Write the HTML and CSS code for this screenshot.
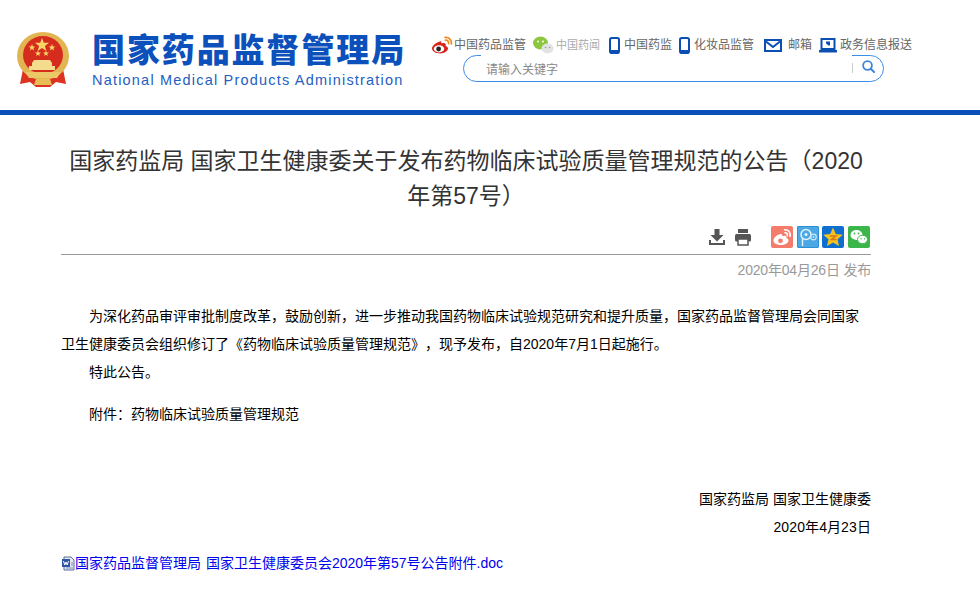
FILE: index.html
```html
<!DOCTYPE html>
<html lang="zh-CN">
<head>
    <meta charset="UTF-8">
    <meta name="viewport" content="width=device-width, initial-scale=1.0">
    <title>国家药监局 国家卫生健康委关于发布药物临床试验质量管理规范的公告</title>
    <link rel="stylesheet" href="styles.css">
</head>
<body>
    <header class="header">
        <div class="logo">
            <svg class="emblem" viewBox="0 0 54 56" width="54" height="56">
                <path d="M7 37 L4 52 L14 50 L20 55 L34 55 L40 50 L50 52 L47 37 Z" fill="#dc3322"/>
                <ellipse cx="27" cy="24" rx="26" ry="24" fill="#e2b552"/>
                <ellipse cx="27" cy="23" rx="20" ry="19" fill="#d62c1e"/>
                <path d="M26 6 L27.800 10.800 L33 10.800 L28.900 14 L30.400 19 L26 16 L21.600 19 L23.100 14 L19 10.800 L24.200 10.800 Z" fill="#f6d667"/>
                <path d="M16 12 L16.900 14.400 L19.400 14.400 L17.400 16 L18.100 18.400 L16 17 L13.900 18.400 L14.600 16 L12.600 14.400 L15.100 14.400 Z" fill="#f6d667"/>
                <path d="M36 12 L36.900 14.400 L39.400 14.400 L37.400 16 L38.100 18.400 L36 17 L33.900 18.400 L34.600 16 L32.600 14.400 L35.100 14.400 Z" fill="#f6d667"/>
                <path d="M22 18.500 L22.800 20.600 L25 20.600 L23.200 22 L23.900 24 L22 22.800 L20.100 24 L20.800 22 L19 20.600 L21.200 20.600 Z" fill="#f6d667"/>
                <path d="M30 18.500 L30.800 20.600 L33 20.600 L31.200 22 L31.900 24 L30 22.800 L28.100 24 L28.800 22 L27 20.600 L29.200 20.600 Z" fill="#f6d667"/>
                <path d="M18 28 H34 L36 31 V34 H39 V38 H13 V34 H16 V31 Z" fill="#f3dc8c"/>
                <path d="M9 40 H45 L41 46 H13 Z" fill="#ecc767"/>
                <path d="M20 47 H34 L36 53 H18 Z" fill="#e8bd55"/>
            </svg>
            <div class="logo-text">
                <div class="logo-cn">国家药品监督管理局</div>
                <div class="logo-en">National Medical Products Administration</div>
            </div>
        </div>
        <div class="header-right">
            <ul class="quick-links">
                <li class="link-weibo">
                    <svg viewBox="0 0 22 18" width="22" height="18">
                        <path d="M9 5.500 C4.500 6.500 1 10 1 12.600 C1 15.600 5 17.500 9 17.500 C14 17.500 17 14.800 17 12.600 C17 11 15.600 10.300 14.600 10 C15.200 8.400 14.800 7 12.600 7 C11.400 7 10.400 7.400 10.200 7.400 C10.600 5.800 10.400 5 9 5.500 Z" fill="#d8261c"/>
                        <ellipse cx="8" cy="12.800" rx="5.200" ry="3.600" fill="#fff"/>
                        <circle cx="7.600" cy="13" r="2.400" fill="#222"/>
                        <path d="M14 1.400 C18 1 21 4 20.400 8 M14.400 4.200 C16.600 4 18 5.600 17.600 7.600" fill="none" stroke="#f08a1d" stroke-width="1.700" stroke-linecap="round"/>
                    </svg>
                    <span>中国药品监管</span>
                </li>
                <li class="link-wechat">
                    <svg viewBox="0 0 22 18" width="22" height="18">
                        <ellipse cx="8.500" cy="7" rx="7.500" ry="6.500" fill="#8dc63f"/>
                        <circle cx="6" cy="5.500" r="1" fill="#fff"/>
                        <circle cx="11" cy="5.500" r="1" fill="#fff"/>
                        <ellipse cx="15.500" cy="12.500" rx="6" ry="5" fill="#e3e3e3"/>
                        <circle cx="13.500" cy="11.500" r=".8" fill="#999"/>
                        <circle cx="17.500" cy="11.500" r=".8" fill="#999"/>
                    </svg>
                    <span class="faded">中国药闻</span>
                </li>
                <li class="link-phone">
                    <svg viewBox="0 0 11 17" width="11" height="17">
                        <rect x="1" y="1" width="9" height="15" rx="1.800" fill="#fff" stroke="#0b4fb3" stroke-width="2"/>
                        <rect x="1" y="13" width="9" height="3" fill="#0b4fb3"/>
                    </svg>
                    <span>中国药监</span>
                </li>
                <li class="link-phone2">
                    <svg viewBox="0 0 11 17" width="11" height="17">
                        <rect x="1" y="1" width="9" height="15" rx="1.800" fill="#fff" stroke="#0b4fb3" stroke-width="2"/>
                        <rect x="1" y="13" width="9" height="3" fill="#0b4fb3"/>
                    </svg>
                    <span>化妆品监管</span>
                </li>
                <li class="link-mail">
                    <svg viewBox="0 0 18 13" width="18" height="13">
                        <rect x="1" y="1" width="16" height="11" fill="#fff" stroke="#0b4fb3" stroke-width="2"/>
                        <path d="M2 2.500 L9 8 L16 2.500" fill="none" stroke="#0b4fb3" stroke-width="2"/>
                    </svg>
                    <span>邮箱</span>
                </li>
                <li class="link-info">
                    <svg viewBox="0 0 18 15" width="18" height="15">
                        <rect x="2.500" y="1" width="13" height="10" fill="#fff" stroke="#0b4fb3" stroke-width="2"/>
                        <path d="M7 3.500 H11 V7.500 H9.400 L7 5.500 Z" fill="#0b4fb3"/>
                        <rect x="0" y="12" width="18" height="2.500" fill="#0b4fb3"/>
                    </svg>
                    <span>政务信息报送</span>
                </li>
            </ul>
            <form class="search">
                <input class="search-input" type="text" placeholder="请输入关键字">
                <button class="search-btn" type="button">
                    <svg viewBox="0 0 16 16" width="13" height="13">
                        <circle cx="6.800" cy="6.800" r="5.400" fill="none" stroke="#3b86d8" stroke-width="2.200"/>
                        <path d="M10.800 10.800 L14.800 14.800" stroke="#3b86d8" stroke-width="2.400" stroke-linecap="round"/>
                    </svg>
                </button>
            </form>
        </div>
    </header>

    <main class="article">
        <h1 class="title">国家药监局 国家卫生健康委关于发布药物临床试验质量管理规范的公告（2020年第57号）</h1>
        <div class="tools">
            <svg viewBox="0 0 18 18" width="18" height="18">
                <path d="M6.500 1 H11.500 V7 H15.500 L9 13.500 L2.500 7 H6.500 Z" fill="#555"/>
                <path d="M1 12 V17 H17 V12 H15 V15 H3 V12 Z" fill="#555"/>
            </svg>
            <svg class="tool-print" viewBox="0 0 18 18" width="18" height="18">
                <rect x="4" y="1" width="10" height="4" fill="#555"/>
                <rect x="1" y="6" width="16" height="7.500" rx="1.500" fill="#555"/>
                <rect x="4" y="11" width="10" height="6" fill="#fff" stroke="#555" stroke-width="1.500"/>
            </svg>
            <div class="share">
                <span class="share-btn share-weibo">
                    <svg viewBox="0 0 22 22" width="22" height="22">
                        <path d="M9.500 8 C5.500 9 2.500 12 2.500 14.500 C2.500 17.300 6 19 10 19 C14.500 19 17.500 16.700 17.500 14.500 C17.500 13 16.200 12.400 15.300 12.100 C15.800 10.500 15 9.500 13.200 9.800 C12.200 10 11.500 10.300 11.300 10.300 C11.600 8.500 11 7.600 9.500 8 Z" fill="#fff"/>
                        <circle cx="9.500" cy="14.800" r="2.400" fill="#f47c6c"/>
                        <path d="M13.500 3.800 C17.500 3.500 20 6.500 19 10.500 M14 6.800 C15.800 6.700 16.800 8 16.300 9.700" fill="none" stroke="#fff" stroke-width="1.600" stroke-linecap="round"/>
                    </svg>
                </span>
                <span class="share-btn share-tweibo">
                    <svg viewBox="0 0 22 22" width="22" height="22">
                        <circle cx="9" cy="8.500" r="5" fill="none" stroke="#e4f2fb" stroke-width="1.500"/>
                        <circle cx="9" cy="8.500" r="1.500" fill="#e4f2fb"/>
                        <path d="M5.500 12.500 V20" stroke="#e4f2fb" stroke-width="1.500"/>
                        <circle cx="16.500" cy="11" r="2.800" fill="none" stroke="#cfe6f7" stroke-width="1.200"/>
                        <circle cx="16.500" cy="11" r=".9" fill="#cfe6f7"/>
                    </svg>
                </span>
                <span class="share-btn share-qzone">
                    <svg viewBox="0 0 22 22" width="22" height="22">
                        <path d="M11 1.500 L13.800 8 L20.800 8.700 L15.500 13.300 L17 20 L11 16.500 L5 20 L6.500 13.300 L1.200 8.700 L8.200 8 Z" fill="#f8c21c"/>
                        <path d="M8 10 H14 L9.500 13.500 H14.500" fill="none" stroke="#d9781a" stroke-width="1.500"/>
                    </svg>
                </span>
                <span class="share-btn share-wechat">
                    <svg viewBox="0 0 22 22" width="22" height="22">
                        <ellipse cx="8.500" cy="9" rx="6" ry="5" fill="#fff"/>
                        <ellipse cx="14.500" cy="13.500" rx="5" ry="4.200" fill="#fff" stroke="#3cb64a"/>
                        <circle cx="6.500" cy="7.500" r=".9" fill="#3cb64a"/>
                        <circle cx="10.500" cy="7.500" r=".9" fill="#3cb64a"/>
                        <circle cx="13" cy="12.800" r=".7" fill="#3cb64a"/>
                        <circle cx="16.500" cy="12.800" r=".7" fill="#3cb64a"/>
                    </svg>
                </span>
            </div>
        </div>
        <div class="date">2020年04月26日 发布</div>
        <div class="content">
            <p class="para">为深化药品审评审批制度改革，鼓励创新，进一步推动我国药物临床试验规范研究和提升质量，国家药品监督管理局会同国家卫生健康委员会组织修订了《药物临床试验质量管理规范》，现予发布，自2020年7月1日起施行。</p>
            <p class="para">特此公告。</p>
            <p class="para attach">附件：药物临床试验质量管理规范</p>
            <p class="sign sign-first">国家药监局 国家卫生健康委</p>
            <p class="sign sign-date">2020年4月23日</p>
            <p class="file">
                <svg viewBox="0 0 14 15" width="14" height="15">
                    <path d="M3 1 H10 L13 4 V14 H3 Z" fill="#e4e9f4" stroke="#5a6f96"/>
                    <rect x="1" y="3" width="8" height="8" fill="#2f55a4"/>
                    <path d="M2.500 5 L3.800 9 L5 6 L6.200 9 L7.500 5" fill="none" stroke="#fff"/>
                    <path d="M10 7 H12 M10 9 H12 M5 12 H12" stroke="#7d8fb3"/>
                </svg><a class="file-link" href="#">国家药品监督管理局 国家卫生健康委员会2020年第57号公告附件.doc</a>
            </p>
        </div>
    </main>
</body>
</html>
```

FILE: styles.css
```css
body {
    margin: 0;
    font-family: "Liberation Sans", "Noto Sans CJK SC", sans-serif;
    background-color: #fff;
    color: #000;
    text-spacing-trim: space-all;
}

.header {
    display: flex;
    height: 110px;
    border-bottom: 5px solid #0b50b8;
}

.logo {
    display: flex;
    width: 415px;
    padding: 32px 0 0 16px;
    box-sizing: border-box;
}

.emblem {
    flex: none;
}

.logo-text {
    margin-left: 22px;
    color: #0c50bb;
}

.logo-cn {
    height: 37px;
    font-size: 33px;
    font-weight: 900;
    line-height: 37px;
    letter-spacing: 1.900px;
    white-space: nowrap;
}

.logo-en {
    margin-top: 3px;
    font-size: 14.500px;
    line-height: 17px;
    letter-spacing: 1.200px;
    color: #2560c0;
    white-space: nowrap;
}

.header-right {
    padding: 35px 0 0 16px;
}

.quick-links {
    display: flex;
    margin: 0;
    padding: 0;
    list-style: none;
    font-size: 12px;
    line-height: 20px;
    color: #666;
    white-space: nowrap;
}

.quick-links li {
    display: flex;
    align-items: center;
}

.link-weibo svg {
    margin-right: 1px;
}

.link-wechat {
    margin-left: 6px;
}

.link-wechat svg {
    margin-right: 2px;
}

.faded {
    font-size: 11px;
    color: #aaa;
}

.link-phone {
    margin-left: 9px;
}

.link-phone2 {
    margin-left: 7px;
}

.link-phone svg,
.link-phone2 svg {
    margin-right: 4px;
}

.link-mail {
    margin-left: 10px;
}

.link-mail svg {
    margin-right: 6px;
}

.link-info {
    margin-left: 7px;
}

.link-info svg {
    margin-right: 3px;
}

.search {
    display: flex;
    width: 421px;
    height: 27px;
    margin-left: 32px;
    box-sizing: border-box;
    border: 1px solid #3b8de8;
    border-radius: 14px;
    background-color: #fff;
}

.search-input {
    flex: 1;
    margin: -1px 0 0 17px;
    padding: 0 0 0 5px;
    border: none;
    outline: none;
    background-color: #fff;
    font-family: "Noto Sans CJK SC", sans-serif;
    font-size: 12px;
}

.search-input::placeholder {
    color: #888;
}

.search-btn {
    display: flex;
    align-items: flex-start;
    width: 31px;
    padding: 0;
    border: none;
    background: none;
}

.search-btn::before {
    content: "";
    width: 1px;
    height: 10px;
    margin: 7px 9px 0 0;
    background-color: #ccc;
}

.search-btn svg {
    margin-top: 4px;
}

.article {
    width: 810px;
    margin-left: 61px;
}

.title {
    margin: 29px 0 0;
    font-size: 23px;
    font-weight: 400;
    line-height: 35px;
    text-align: center;
    color: #333;
}

.tools {
    display: flex;
    justify-content: flex-end;
    align-items: center;
    height: 34px;
    margin-top: 6px;
    border-bottom: 1px solid #999;
}

.tool-print {
    margin-left: 8px;
}

.share {
    display: flex;
    gap: 3.600px;
    margin: 0 1px 0 19px;
}

.share-btn {
    display: block;
    width: 22px;
    height: 22px;
    border-radius: 2px;
}

.share-weibo {
    background-color: #f47c6c;
}

.share-tweibo {
    background-color: #4aa8e4;
    box-shadow: inset 0 0 0 1px #2f8fd0;
}

.share-qzone {
    background-color: #0f6fd0;
}

.share-wechat {
    background-color: #3cb64a;
}

.date {
    margin-top: 5px;
    font-size: 14px;
    line-height: 20px;
    letter-spacing: -.2px;
    text-align: right;
    color: #999;
}

.content {
    margin-top: 22px;
    font-size: 14px;
    line-height: 28px;
}

.content p {
    margin: 0;
}

.para {
    text-indent: 28px;
}

.content .attach {
    margin-top: 14px;
}

.sign {
    text-align: right;
}

.sign-date {
    letter-spacing: .1px;
}

.content .sign-first {
    margin-top: 57px;
}

.content .file {
    display: flex;
    align-items: center;
    margin-top: 8px;
}

.file-link {
    word-spacing: 1px;
    color: #00e;
    text-decoration: none;
}
```
